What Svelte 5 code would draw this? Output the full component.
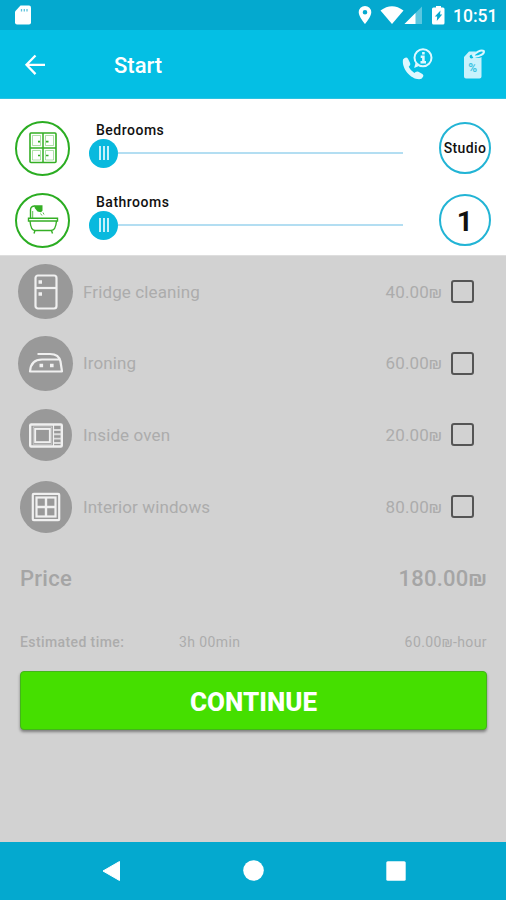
<script lang="ts">
  interface Room {
    label: string;
    icon: 'cabinet' | 'bath';
    value: string;
  }

  interface Extra {
    label: string;
    icon: 'fridge' | 'iron' | 'oven' | 'window';
    price: number;
    checked: boolean;
  }

  const rooms: Room[] = [
    { label: 'Bedrooms', icon: 'cabinet', value: 'Studio' },
    { label: 'Bathrooms', icon: 'bath', value: '1' },
  ];

  let extras: Extra[] = $state([
    { label: 'Fridge cleaning', icon: 'fridge', price: 40, checked: false },
    { label: 'Ironing', icon: 'iron', price: 60, checked: false },
    { label: 'Inside oven', icon: 'oven', price: 20, checked: false },
    { label: 'Interior windows', icon: 'window', price: 80, checked: false },
  ]);

  const total = $derived(extras.reduce((sum, e) => sum + (e.checked ? e.price : 0), 180));

  function money(n: number) {
    return n.toFixed(2) + '₪';
  }
</script>

<div class="screen">
  <div class="status">
    <svg class="sd" width="16" height="20" viewBox="0 0 16 20">
      <path d="M5.500 0.500h8.500a2 2 0 0 1 2 2v15a2 2 0 0 1-2 2H2a2 2 0 0 1-2-2V6.500z" fill="#fff" />
      <path d="M6.500 4v2.500M9.300 4v2.500M12 4v2.500" stroke="#5fc3dc" stroke-width="1.300" />
    </svg>
    <svg width="100" height="30" viewBox="0 0 100 30" class="signals">
      <path fill="#fff" fill-rule="evenodd" d="M12 6a6.300 6.300 0 0 0-6.300 6.300c0 4.700 6.300 11.700 6.300 11.700s6.300-7 6.300-11.700A6.300 6.300 0 0 0 12 6zm0 4a2.300 2.300 0 1 1 0 4.600 2.300 2.300 0 0 1 0-4.600z" />
      <path fill="#fff" d="M27.500 10.500Q39 2 50.500 10.500L39 24z" />
      <path fill="#fff" opacity=".35" d="M69 6.500V24H51.500z" />
      <path fill="#fff" d="M62.500 13v11H51.500z" />
      <path fill="#fff" d="M82 7.500h1V6h5v1.500h2A1.500 1.500 0 0 1 91.500 9v14a1.500 1.500 0 0 1-1.500 1.500H80.500A1.500 1.500 0 0 1 79 23V9a1.500 1.500 0 0 1 1.500-1.500z" />
      <path fill="#05a9cf" d="M87.500 10.500l-.5 4h2.200L83.800 21l.4-4.500h-2.400z" />
    </svg>
    <span class="clock">10:51</span>
  </div>

  <header>
    <svg class="back" width="22" height="22" viewBox="0 0 22 22" fill="none" stroke="#fff" stroke-width="2.300">
      <path d="M11.500 1.500L2.500 10.800l9 9.300M2.500 10.800H21" />
    </svg>
    <h1>Start</h1>
    <svg width="32" height="32" viewBox="0 0 32 32">
      <path fill="#dff8ff" d="M2 11.500q1-1.700 3-2 1.300 0 2 1.300l2.200 4.400q.5 1.600-.8 2.700l-.7.800q1.600 3.600 5.700 6.200l1.200-.8q1.400-1 2.800-.3l4 2.300q1.600 1 .7 2.600-1.300 2.600-4 2.600C9.500 31 .5 20.500 2 11.500z" />
      <circle cx="22" cy="9.700" r="8.500" fill="none" stroke="#dff8ff" stroke-width="2" />
      <path fill="#dff8ff" d="M14.500 15l-1.300 5 5.300-2.300z" />
      <path fill="none" stroke="#dff8ff" stroke-width="2.600" d="M22.400 4v2.400M19.700 8.800h2.700v5.500M19.500 14.300h5.500" />
    </svg>
    <svg class="tag" width="24" height="32" viewBox="0 0 24 32">
      <path fill="#c9f2fc" fill-rule="evenodd" d="M7 3.500h9l3.500 5V28.500a2 2 0 0 1-2 2H4a2 2 0 0 1-2-2V9zm2.500 3.200a1.900 1.900 0 1 0 0 3.800 1.900 1.900 0 0 0 0-3.800z" />
      <path fill="none" stroke="#04bfe4" stroke-width="4" d="M13 8c2.500-4 6-6.500 8.500-5 1.500 2.300-3 5.500-8 5" />
      <path fill="none" stroke="#d8f7ff" stroke-width="2.200" d="M10.500 8.500c2.500-4 8.500-7.200 11.200-5.500 1.500 2.500-4.500 6-9.500 5.500" />
      <text x="10.800" y="24" text-anchor="middle" class="percent">%</text>
    </svg>
  </header>

  <section class="rooms">
    {#each rooms as room}
      <div class="room">
        <div class="ring">
          <svg width="34" height="34" viewBox="0 0 34 34" fill="none" stroke="#35af25">
            {#if room.icon === 'cabinet'}
              <rect x="4" y="2" width="26" height="29.500" rx="1" stroke-width="1.600" />
              <path stroke-width="1.500" d="M17 2v29.500M4 17h26" />
              <path stroke-width=".4" d="M6.500 4.500h8v10h-8zM19.500 4.500h8v10h-8zM6.500 19.500h8V29h-8zM19.500 19.500h8V29h-8z" />
              <path stroke-width="1.700" d="M12 10.700h2M20 10.700h2.500M12 24.500h2M20 24.500h2.500" />
            {:else}
              <path stroke-width="1.400" d="M4.500 15V7q0-4 4.500-4M2.500 15.200h29v2.800h-29zM4 18c.5 6 2 9.500 5 9.500h16c3.500 0 5-3.500 5.500-9.500M9 27.500l-1 3M25.500 27.500l1 3" />
              <path fill="#35af25" stroke="none" d="M8.500 2.200h8v5.500L15 9.200l-3.500-.7L8.700 5z" />
              <path stroke-width=".8" d="M14.500 10.500l1.500 2M17 9.500l1 2M6.700 15V8" />
            {/if}
          </svg>
        </div>
        <div class="control">
          <span class="label">{room.label}</span>
          <div class="slider">
            <div class="thumb"><i></i><i></i><i></i></div>
            <div class="track"></div>
          </div>
        </div>
        <div class="value" class:number={room.value.length === 1}>{room.value}</div>
      </div>
    {/each}
  </section>

  <main>
    {#each extras as extra}
      <label class="extra">
        <span class="slot">
          <span class="disc" class:small={extra.icon === 'oven' || extra.icon === 'window'}>
            <svg width="36" height="36" viewBox="0 0 36 36" fill="none" stroke="#f0f0f0" stroke-width="2.200">
              {#if extra.icon === 'fridge'}
                <rect x="7.500" y="1.500" width="21" height="33" rx="2.500" />
                <path d="M7.500 14h21" />
                <path stroke-width="3.300" d="M10.500 8h3.500M10.500 20h3.500" />
              {:else if extra.icon === 'iron'}
                <path stroke-linejoin="round" d="M9.500 9H22c6.500 0 9.500 2.500 10.500 7.500l1.500 10H2c.5-7.500 4.500-12 12-12h17" />
                <path stroke-width="3.600" d="M11.500 20.500h3.600M22 20.500h3.600" />
              {:else if extra.icon === 'oven'}
                <rect x="2.200" y="7.500" width="31.600" height="22" rx="1" stroke-width="2.400" />
                <path stroke-width="1.200" d="M25.500 8v21" />
                <rect x="6.500" y="11.300" width="16" height="14.500" stroke-width="3.200" />
                <rect x="5.800" y="10.600" width="17.400" height="16" stroke="#999" stroke-width=".8" />
                <path stroke="#ddd" stroke-width="1.900" d="M26 13h7M26 17.300h7M26 21.600h7M26 26h7" />
              {:else}
                <rect x="4.800" y="4.800" width="26.400" height="26.400" rx="1" />
                <rect x="8.500" y="8.500" width="19" height="19" />
                <path stroke-width="2.400" d="M18 8v20M8 18h20" />
              {/if}
            </svg>
          </span>
        </span>
        <span class="name">{extra.label}</span>
        <span class="cost">{money(extra.price)}</span>
        <input type="checkbox" bind:checked={extra.checked} />
      </label>
    {/each}

    <div class="total">
      <span>Price</span>
      <span class="sum">{money(total)}</span>
    </div>

    <div class="estimate">
      <b>Estimated time:</b>
      <span class="time">3h 00min</span>
      <span class="rate">{money(60)}-hour</span>
    </div>

    <button type="button">CONTINUE</button>
  </main>

  <nav>
    <svg width="20" height="22" viewBox="0 0 20 22"><path fill="#fff" d="M17.500 1.500v19L1 11z" stroke="#fff" stroke-linejoin="round" /></svg>
    <svg width="22" height="22" viewBox="0 0 22 22"><circle cx="10.500" cy="10.500" r="10.300" fill="#fff" /></svg>
    <svg width="20" height="20" viewBox="0 0 20 20"><rect x=".3" y=".3" width="19.400" height="19.400" rx="1.500" fill="#fff" /></svg>
  </nav>
</div>

<style>
  :global(body) {
    margin: 0;
  }

  .screen {
    width: 506px;
    height: 900px;
    display: flex;
    flex-direction: column;
    overflow: hidden;
    background: #d2d2d2;
    font-family: Roboto, 'Noto Sans', sans-serif;
  }

  .status {
    height: 30px;
    display: flex;
    align-items: center;
    background: #04a9cf;
    color: #fff;
    flex: none;
  }

  .sd {
    margin-left: 15px;
  }

  .signals {
    flex: none;
    margin-left: 322px;
  }

  .clock {
    font-size: 17.5px;
    font-weight: 500;
    line-height: 30px;
    padding-top: 1px;
  }

  header {
    box-sizing: border-box;
    height: 69px;
    display: flex;
    align-items: center;
    padding-left: 24px;
    background: #04bfe4;
    border-bottom: 1px solid #2cc3e2;
    flex: none;
  }

  .back {
    margin-top: 1px;
  }

  h1 {
    width: 287px;
    margin: 0 0 0 68px;
    padding-top: 3px;
    color: #fff;
    font-size: 22px;
    font-weight: 500;
  }

  .tag {
    margin-left: 29px;
  }

  .percent {
    font-size: 12px;
    font-weight: 700;
    fill: #3fc4e2;
  }

  .rooms {
    box-sizing: border-box;
    height: 157px;
    padding-top: 13px;
    background: #fff;
    border-bottom: 1px solid #dedede;
    flex: none;
  }

  .room {
    display: flex;
    align-items: center;
    height: 72px;
    padding: 0 15px;
  }

  .ring,
  .value {
    box-sizing: border-box;
    display: flex;
    align-items: center;
    justify-content: center;
    border-radius: 50%;
    flex: none;
  }

  .ring {
    width: 55px;
    height: 55px;
    border: 2px solid #2bad22;
  }

  .control {
    width: 314px;
    margin-left: 19px;
    padding-bottom: 8px;
  }

  .label {
    display: block;
    margin-left: 7px;
    color: #111;
    font-size: 14px;
    font-weight: 500;
    line-height: 18px;
    letter-spacing: 0.5px;
  }

  .slider {
    display: flex;
    align-items: center;
  }

  .thumb {
    width: 29px;
    height: 29px;
    display: flex;
    align-items: center;
    justify-content: center;
    gap: 2px;
    border-radius: 50%;
    background: #08b9de;
  }

  .thumb i {
    width: 2px;
    height: 14px;
    background: #c4f1fb;
  }

  .track {
    flex: 1;
    height: 2px;
    background: #b3def2;
  }

  .value {
    width: 52px;
    height: 52px;
    margin-left: 36px;
    border: 2px solid #22b4d5;
    color: #111;
    font-size: 14px;
    font-weight: 500;
    letter-spacing: 0.4px;
  }

  .number {
    padding-top: 3px;
    font-size: 28px;
    font-weight: 700;
  }

  main {
    flex: 1;
    color: #acacac;
  }

  .extra {
    display: flex;
    align-items: center;
    height: 71.6px;
  }

  .slot {
    width: 55px;
    margin-left: 18px;
    display: flex;
    justify-content: center;
  }

  .disc {
    width: 55px;
    height: 55px;
    display: flex;
    align-items: center;
    justify-content: center;
    border-radius: 50%;
    background: #999;
  }

  .small {
    width: 52px;
    height: 52px;
  }

  .name {
    width: 290px;
    margin-left: 10px;
    font-size: 17px;
    letter-spacing: 0.12px;
  }

  .cost {
    width: 69px;
    font-size: 17px;
    text-align: right;
    letter-spacing: 0.1px;
  }

  input {
    appearance: none;
    box-sizing: border-box;
    width: 23px;
    height: 23px;
    margin: 0 0 0 9px;
    border: 2px solid #555;
    border-radius: 3px;
  }

  input:checked {
    background: #555;
  }

  .total,
  .estimate {
    display: flex;
    align-items: center;
    padding: 0 19px 0 20px;
  }

  .total {
    height: 72px;
    justify-content: space-between;
    color: #a5a5a5;
    font-size: 22px;
    font-weight: 500;
    letter-spacing: 0.25px;
  }

  .estimate {
    height: 56px;
    font-size: 14px;
    letter-spacing: 0.4px;
  }

  .estimate b {
    width: 159px;
    font-weight: 500;
  }

  .rate {
    margin-left: auto;
  }

  button {
    display: block;
    width: 467px;
    height: 59px;
    margin: 1px 0 0 20px;
    padding: 3px 0 0;
    border: 1px solid #43b51a;
    border-radius: 4px;
    background: #45df00;
    box-shadow: 0 2px 3px rgba(0, 0, 0, 0.4);
    color: #fff;
    font: 800 26px Roboto, sans-serif;
  }

  nav {
    box-sizing: border-box;
    height: 58px;
    display: flex;
    align-items: center;
    justify-content: space-between;
    padding: 0 100px 0 102px;
    background: #04a9cf;
    flex: none;
  }
</style>
